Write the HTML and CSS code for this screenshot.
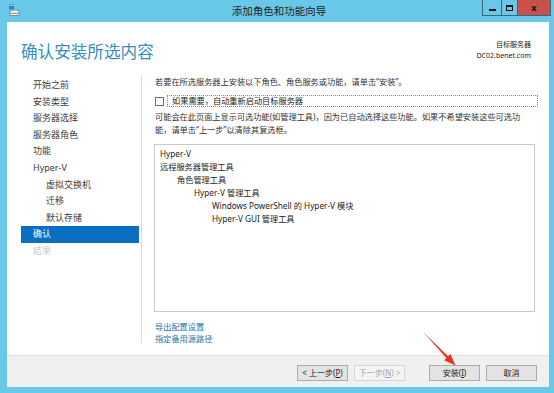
FILE: index.html
```html
<!DOCTYPE html>
<html lang="zh-CN">
<head>
    <meta charset="UTF-8">
    <meta name="viewport" content="width=device-width, initial-scale=1.0">
    <title>添加角色和功能向导</title>
    <link rel="stylesheet" href="styles.css">
</head>
<body>
    <div class="window">
        <div class="titlebar">
            <svg class="app-icon" width="12" height="12" viewBox="0 0 12 12">
                <rect x="1" y="0.5" width="5" height="5" fill="#2f7fc1"/>
                <rect x="1.5" y="1" width="4" height="1" fill="#9fd3f0"/>
                <path d="M3 6 L10 6 L11.5 9 L11.5 11.5 L1.5 11.5 L1.5 9 Z" fill="#e9eef2" stroke="#6f7e88" stroke-width="0.8"/>
                <rect x="2" y="9" width="9" height="1" fill="#8a98a2"/>
            </svg>
            <div class="title">添加角色和功能向导</div>
            <div class="win-controls">
                <span class="win-btn min"><i></i></span>
                <span class="win-btn max"><i></i></span>
                <span class="win-btn close">x</span>
            </div>
        </div>

        <div class="client">
            <header class="page-header">
                <h1>确认安装所选内容</h1>
                <div class="target">
                    <div>目标服务器</div>
                    <div>DC02.benet.com</div>
                </div>
            </header>

            <div class="wizard">
                <nav class="steps">
                    <div class="step">开始之前</div>
                    <div class="step">安装类型</div>
                    <div class="step">服务器选择</div>
                    <div class="step">服务器角色</div>
                    <div class="step">功能</div>
                    <div class="step">Hyper-V</div>
                    <div class="step sub">虚拟交换机</div>
                    <div class="step sub">迁移</div>
                    <div class="step sub">默认存储</div>
                    <div class="step active">确认</div>
                    <div class="step disabled">结果</div>
                </nav>

                <main class="content">
                    <p class="intro">若要在所选服务器上安装以下角色、角色服务或功能，请单击“安装”。</p>
                    <div class="restart">
                        <span class="checkbox"></span>
                        <span class="restart-label">如果需要，自动重新启动目标服务器</span>
                    </div>
                    <p class="note">可能会在此页面上显示可选功能(如管理工具)，因为已自动选择这些功能。如果不希望安装这些可选功能，请单击“上一步”以清除其复选框。</p>

                    <div class="feature-box">
                        <div class="feat">Hyper-V</div>
                        <div class="feat">远程服务器管理工具</div>
                        <div class="feat lvl1">角色管理工具</div>
                        <div class="feat lvl2">Hyper-V 管理工具</div>
                        <div class="feat lvl3">Windows PowerShell 的 Hyper-V 模块</div>
                        <div class="feat lvl3">Hyper-V GUI 管理工具</div>
                    </div>

                    <div class="links">
                        <a href="#">导出配置设置</a>
                        <a href="#">指定备用源路径</a>
                    </div>
                </main>
            </div>

            <footer class="buttons">
                <button class="btn">&lt; 上一步(<u>P</u>)</button>
                <button class="btn" disabled>下一步(<u>N</u>) &gt;</button>
                <button class="btn install">安装(<u>I</u>)</button>
                <button class="btn">取消</button>
            </footer>
        </div>
    </div>

    <svg class="pointer" width="554" height="393" viewBox="0 0 554 393">
        <polygon points="423,332 446.4,357.9 444.2,360.2 455.5,365.5 450.4,354.1 448.1,356.3" fill="#ee2d24"/>
    </svg>
</body>
</html>
```

FILE: styles.css
```css
:root {
    --frame-color: #69c8e8;
    --text-color: #333;
    --link-color: #2675aa;
    --select-color: #0a6fc2;
}

* {
    box-sizing: border-box;
}

body {
    margin: 0;
    width: 554px;
    height: 393px;
    overflow: hidden;
    background-color: var(--frame-color);
    font-family: 'Noto Sans', 'Noto Sans CJK SC', sans-serif;
    color: var(--text-color);
    position: relative;
}

.window {
    height: 393px;
}

/* title bar */
.titlebar {
    height: 22px;
    display: grid;
    grid-template-columns: 1fr auto 1fr;
    align-items: start;
}

.app-icon {
    margin: 4px 0 0 8px;
}

.title {
    font-family: 'Noto Sans CJK SC', sans-serif;
    font-size: 10.5px;
    line-height: 22px;
    color: #222;
    padding-left: 4px;
}

.win-controls {
    justify-self: end;
    display: flex;
    margin-right: 3px;
    border: 1px solid #3b6678;
    border-top: none;
    height: 16px;
}

.win-btn {
    display: flex;
    align-items: center;
    justify-content: center;
    height: 15px;
}

.win-btn.min {
    width: 19px;
    border-right: 1px solid #3b6678;
}

.win-btn.min i {
    width: 7px;
    height: 2px;
    background-color: #111;
    margin-top: 4px;
}

.win-btn.max {
    width: 16px;
    border-right: 1px solid #3b6678;
}

.win-btn.max i {
    width: 7px;
    height: 6px;
    border: 1px solid #111;
    border-top-width: 2px;
}

.win-btn.close {
    width: 32px;
    background-color: #c8524b;
    color: #1a1a1a;
    font-family: 'DejaVu Sans', sans-serif;
    font-weight: bold;
    font-size: 9px;
}

/* client area */
.client {
    margin: 0 5px 0 7px;
    height: 365px;
    background-color: #fff;
    display: flex;
    flex-direction: column;
}

.page-header {
    height: 53px;
    display: flex;
    justify-content: space-between;
    align-items: flex-start;
    padding: 0 18px 0 14px;
}

.page-header h1 {
    margin: 19px 0 0;
    font-family: 'Noto Sans CJK SC', sans-serif;
    font-weight: normal;
    font-size: 16.6px;
    line-height: 20px;
    color: #3a8cbc;
}

.target {
    margin-top: 17px;
    text-align: right;
    font-size: 7px;
    line-height: 11px;
    color: #222;
}

.wizard {
    height: 280px;
    display: flex;
    align-items: flex-start;
}

.steps {
    width: 135px;
    height: 268px;
    padding: 2px 2px 0 14px;
    border-right: 1px solid #dadada;
    font-size: 9px;
    color: #3c3c3c;
}

.step {
    height: 16.6px;
    line-height: 16.6px;
    padding-left: 12px;
}

.step.sub {
    padding-left: 25px;
}

.step.active {
    background-color: var(--select-color);
    color: #fff;
}

.step.disabled {
    color: #c9c9c9;
}

.content {
    flex: 1;
    padding: 0 14px 0 13px;
    font-size: 8.2px;
    line-height: 13px;
}

.content p {
    margin: 0;
}

.restart {
    display: flex;
    align-items: center;
    gap: 3px;
    margin-top: 7px;
    height: 12px;
}

.checkbox {
    width: 9px;
    height: 9px;
    border: 1px solid #6f6f6f;
    background-color: #fff;
}

.restart-label {
    flex: 1;
    height: 12px;
    line-height: 10px;
    margin-right: -3px;
    padding-left: 4px;
    border: 1px dotted #888;
    color: #222;
}

.note {
    margin-top: 3px !important;
    padding-right: 8px;
}

.feature-box {
    margin: 8px 0 0 -1px;
    height: 168px;
    border: 1px solid #c9c9c9;
    padding: 2px 5px;
    color: #222;
}

.feat.lvl1 {
    padding-left: 17px;
}

.feat.lvl2 {
    padding-left: 34px;
}

.feat.lvl3 {
    padding-left: 52px;
}

.links {
    margin-top: 9px;
    display: flex;
    flex-direction: column;
    line-height: 11.5px;
}

.links a {
    color: var(--link-color);
    text-decoration: none;
}

/* footer buttons */
.buttons {
    flex: 1;
    background-color: #f0f0f0;
    border-top: 1px solid #e2e2e2;
    display: flex;
    justify-content: flex-end;
    align-items: flex-start;
    padding: 9px 12px 0 0;
    gap: 6px;
}

.btn {
    width: 51px;
    height: 16px;
    padding: 0;
    border: 1px solid #acacac;
    background-color: #e3e3e3;
    font-family: 'Noto Sans', 'Noto Sans CJK SC', sans-serif;
    font-size: 8px;
    line-height: 14px;
    color: #222;
}

.btn:disabled {
    border-color: #d6d6d6;
    background-color: #f4f4f4;
    color: #a6a6a6;
}

.btn.install {
    margin-left: 18px;
}

.pointer {
    position: absolute;
    left: 0;
    top: 0;
    pointer-events: none;
}
```
